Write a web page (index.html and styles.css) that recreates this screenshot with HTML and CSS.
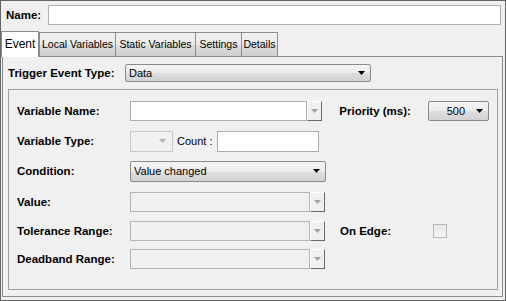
FILE: index.html
```html
<!DOCTYPE html>
<html lang="en">
<head>
  <meta charset="UTF-8">
  <title>Event</title>
  <link rel="stylesheet" href="styles.css">
</head>
<body>
  <div class="window">
    <div class="name-row">
      <span class="lbl name-lbl">Name:</span>
      <input class="text-field name-input" type="text">
    </div>

    <div class="tab-strip">
      <div class="tab active tab-event">Event</div>
      <div class="tab tab-local">Local Variables</div>
      <div class="tab tab-static">Static Variables</div>
      <div class="tab tab-settings">Settings</div>
      <div class="tab tab-details">Details</div>
    </div>

    <div class="tab-panel">
      <div class="trigger-row">
        <span class="lbl trigger-lbl">Trigger Event Type:</span>
        <div class="drop trigger-drop">
          <span class="drop-text">Data</span>
          <svg class="arrow" width="7" height="4" viewBox="0 0 7 4"><path d="M0 0h7L3.5 4z" fill="#000"/></svg>
        </div>
      </div>

      <div class="group">
        <div class="row">
          <span class="lbl field-lbl">Variable Name:</span>
          <div class="field-area">
            <div class="combo combo-name">
              <div class="combo-edit white"></div>
              <div class="combo-btn">
                <svg width="7" height="4" viewBox="0 0 7 4"><path d="M0 0h7L3.5 4z" fill="#a2a2a2"/></svg>
              </div>
            </div>
          </div>
          <span class="lbl side-lbl">Priority (ms):</span>
          <div class="drop prio-drop">
            <span class="drop-text">500</span>
            <svg class="arrow" width="7" height="4" viewBox="0 0 7 4"><path d="M0 0h7L3.5 4z" fill="#000"/></svg>
          </div>
        </div>

        <div class="row">
          <span class="lbl field-lbl">Variable Type:</span>
          <div class="field-area">
            <div class="type-box">
              <svg width="7" height="4" viewBox="0 0 7 4"><path d="M0 0h7L3.5 4z" fill="#b4b4b4"/></svg>
            </div>
            <span class="count-lbl">Count :</span>
            <input class="text-field count-input" type="text">
          </div>
        </div>

        <div class="row">
          <span class="lbl field-lbl">Condition:</span>
          <div class="field-area">
            <div class="drop cond-drop">
              <span class="drop-text">Value changed</span>
              <svg class="arrow" width="7" height="4" viewBox="0 0 7 4"><path d="M0 0h7L3.5 4z" fill="#000"/></svg>
            </div>
          </div>
        </div>

        <div class="row row-value">
          <span class="lbl field-lbl">Value:</span>
          <div class="field-area">
            <div class="combo combo-wide">
              <div class="combo-edit"></div>
              <div class="combo-btn">
                <svg width="7" height="4" viewBox="0 0 7 4"><path d="M0 0h7L3.5 4z" fill="#a2a2a2"/></svg>
              </div>
            </div>
          </div>
        </div>

        <div class="row row-tol">
          <span class="lbl field-lbl">Tolerance Range:</span>
          <div class="field-area">
            <div class="combo combo-wide">
              <div class="combo-edit"></div>
              <div class="combo-btn">
                <svg width="7" height="4" viewBox="0 0 7 4"><path d="M0 0h7L3.5 4z" fill="#a2a2a2"/></svg>
              </div>
            </div>
          </div>
          <span class="lbl side-lbl">On Edge:</span>
          <span class="check"></span>
        </div>

        <div class="row row-dead">
          <span class="lbl field-lbl">Deadband Range:</span>
          <div class="field-area">
            <div class="combo combo-wide">
              <div class="combo-edit"></div>
              <div class="combo-btn">
                <svg width="7" height="4" viewBox="0 0 7 4"><path d="M0 0h7L3.5 4z" fill="#a2a2a2"/></svg>
              </div>
            </div>
          </div>
        </div>
      </div>
    </div>
  </div>
</body>
</html>
```

FILE: styles.css
```css
html, body {
  margin: 0;
  padding: 0;
  background: #f0f0f0;
}
body {
  font-family: 'Liberation Sans', Arial, sans-serif;
  font-size: 11px;
  color: #000;
}
.window {
  width: 506px;
  height: 301px;
  box-sizing: border-box;
  border: 1px solid #646464;
  background: #f0f0f0;
  display: flex;
  flex-direction: column;
}
.lbl {
  font-weight: bold;
  font-size: 11.5px;
  white-space: nowrap;
}

/* name */
.name-row {
  display: flex;
  align-items: center;
  padding: 4px 4px 0 5px;
  height: 20px;
}
.name-lbl {
  width: 42px;
}
.text-field {
  box-sizing: border-box;
  height: 20px;
  border: 1px solid #abadb3;
  background: #fff;
  margin: 0;
  padding: 0;
  outline: none;
}
.name-input {
  flex: 1;
}

/* tabs */
.tab-strip {
  display: flex;
  align-items: flex-end;
  margin-top: 6px;
  padding-left: 0;
  height: 25px;
  position: relative;
  z-index: 1;
}
.tab {
  box-sizing: border-box;
  height: 24px;
  line-height: 22px;
  font-size: 10.5px;
  text-align: center;
  border: 1px solid #898c95;
  border-bottom: none;
  margin-right: -1px;
  background: linear-gradient(#f2f2f2 0%, #ebebeb 50%, #dddddd 51%, #cfcfcf 100%);
  white-space: nowrap;
}
.tab.active {
  height: 26px;
  margin-bottom: -1px;
  font-size: 12px;
  line-height: 24px;
  background: #fff;
  margin-right: 0;
}
.tab-event { width: 38px; }
.tab-local { width: 77px; }
.tab-static { width: 81px; }
.tab-settings { width: 47px; }
.tab-details { width: 37px; }
.tab-panel {
  flex: 1;
  margin: 0 2px 3px 1px;
  border: 1px solid #898c95;
  background: #f0f0f0;
  padding: 7px 4px 6px 5px;
  display: flex;
  flex-direction: column;
}

/* trigger */
.trigger-row {
  display: flex;
  align-items: center;
  height: 18px;
}
.trigger-lbl {
  width: 117px;
}
.drop {
  box-sizing: border-box;
  display: flex;
  align-items: center;
  border: 1px solid #8a8a8a;
  border-radius: 2px;
  background: linear-gradient(#f4f4f4 0%, #ececec 50%, #dedede 51%, #d2d2d2 100%);
  padding: 0 5px 0 3px;
}
.drop-text {
  flex: 1;
}
.trigger-drop {
  width: 246px;
  height: 18px;
}

/* group */
.group {
  flex: 1;
  margin-top: 7px;
  border: 1px solid #a0a0a0;
  padding: 11px 8px 0 8px;
  display: flex;
  flex-direction: column;
  gap: 10px;
}
.row {
  display: flex;
  align-items: center;
  height: 20px;
}
.row-value { margin-top: 1px; }
.row-tol { margin-top: -1px; }
.row-dead { margin-top: -2px; }
.field-lbl {
  width: 113px;
}
.field-area {
  width: 210px;
  display: flex;
  align-items: center;
}
.side-lbl {
  width: 89px;
}

/* combos */
.combo {
  display: flex;
  height: 20px;
}
.combo-name { width: 192px; }
.combo-wide { width: 195px; }
.combo-edit {
  flex: 1;
  box-sizing: border-box;
  border: 1px solid #b4b4b4;
  background: #f0f0f0;
}
.combo-edit.white {
  border-color: #abadb3;
  background: #fff;
}
.combo-btn {
  box-sizing: border-box;
  width: 15px;
  border-top: 1px solid #fff;
  border-left: 1px solid #fff;
  border-right: 1px solid #696969;
  border-bottom: 1px solid #696969;
  background: #f0f0f0;
  display: flex;
  align-items: center;
  justify-content: center;
}
.type-box {
  box-sizing: border-box;
  width: 43px;
  height: 21px;
  border: 1px solid #c8c8c8;
  display: flex;
  align-items: center;
  justify-content: flex-end;
  padding-right: 6px;
}
.count-lbl {
  margin: 0 5px 0 4px;
  white-space: nowrap;
}
.count-input {
  width: 102px;
  height: 21px;
}
.cond-drop {
  width: 196px;
  height: 21px;
}
.prio-drop {
  width: 61px;
  height: 20px;
  padding: 0 5px 0 0;
  text-align: right;
}
.prio-drop .drop-text {
  margin-right: 11px;
}
.check {
  box-sizing: border-box;
  width: 14px;
  height: 14px;
  margin-left: 4px;
  border: 1px solid #b8b8b8;
  background: linear-gradient(#e8e8e8, #f6f6f6);
}
```
